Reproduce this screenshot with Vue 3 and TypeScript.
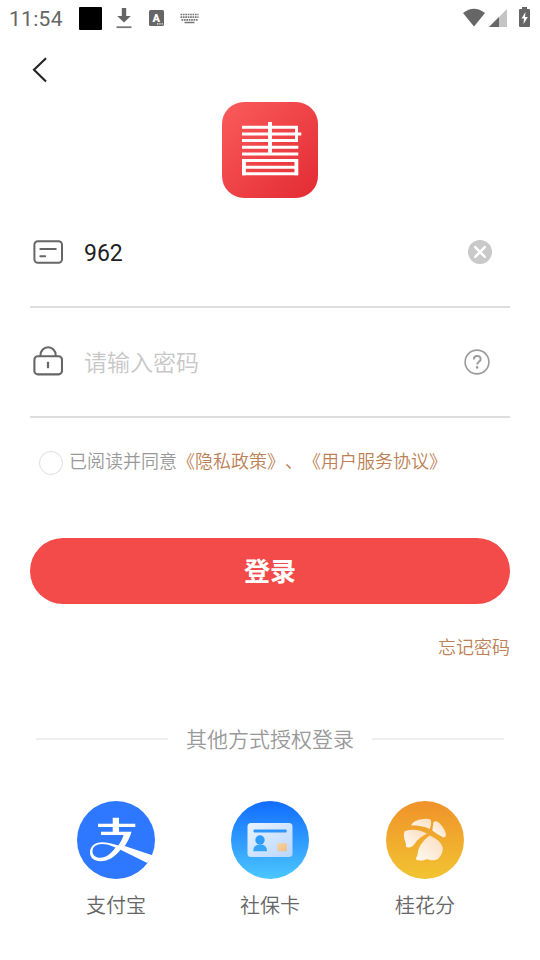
<script setup lang="ts">
import { ref } from 'vue'

interface Provider {
  id: 'alipay' | 'social' | 'osmanthus'
  label: string
}

const account = ref('962')
const password = ref('')
const agreed = ref(false)
const providers: Provider[] = [
  { id: 'alipay', label: '支付宝' },
  { id: 'social', label: '社保卡' },
  { id: 'osmanthus', label: '桂花分' },
]
</script>

<template>
  <main class="screen">
    <header class="status">
      <span class="clock">11:54</span>
      <span class="block"></span>
      <svg class="download" width="16" height="22" viewBox="0 0 16 22">
        <path d="M5.800 1h4.400v8h4.600L8 15.500 1.200 9h4.600z" fill="#666" />
        <path d="M.5 20.200h15" stroke="#777" stroke-width="1.800" />
      </svg>
      <svg class="ime" width="15" height="16" viewBox="0 0 15 16">
        <rect width="15" height="16" rx="1.500" fill="#666" />
        <text x="7.300" y="11.600" text-anchor="middle" class="ime-letter">A</text>
        <path d="M8 13.900h1.300m1 0h1.300m1 0h1.200" stroke="#fff" stroke-width="1.200" />
      </svg>
      <svg class="keyboard" width="19" height="11" viewBox="0 0 19 11">
        <path d="M.5 1.500h18M.5 4.200h18M1.500 6.900h16" stroke="#777" stroke-width="1.700" stroke-dasharray="1.700 .7" />
        <path d="M4.500 9.500h10" stroke="#777" stroke-width="1.500" />
      </svg>
      <span class="spacer"></span>
      <svg width="24" height="20" viewBox="0 0 24 20">
        <path d="M1 5Q12-3.500 23 5L12 18.500z" fill="#666" />
      </svg>
      <svg class="signal" width="18" height="18" viewBox="0 0 18 18">
        <path d="M18 0v18H0z" fill="#c4c4c4" />
        <path d="M10 8v10H0z" fill="#666" />
      </svg>
      <svg class="battery" width="11" height="20" viewBox="0 0 11 20">
        <path d="M3 0h5v2h2q1 0 1 1v16q0 1-1 1H1q-1 0-1-1V3q0-1 1-1h2z" fill="#666" />
        <path d="M6.500 5L2.500 11.500h2.500L4.500 17 8.800 10H6z" fill="#fff" />
      </svg>
    </header>

    <nav class="nav">
      <button class="plain back" aria-label="返回">
        <svg width="18" height="28" viewBox="0 0 18 28">
          <path d="M15 2.200L3 13.800 15 25.400" fill="none" stroke="#222" stroke-width="2.100" />
        </svg>
      </button>
    </nav>

    <svg class="logo" width="96" height="96" viewBox="0 0 96 96">
      <defs>
        <linearGradient id="red" x1="0" y1="0" x2="1" y2="1">
          <stop stop-color="#fb5b5c" />
          <stop offset="1" stop-color="#e22b32" />
        </linearGradient>
      </defs>
      <rect width="96" height="96" rx="22" fill="url(#red)" />
      <g fill="none" stroke="#fff" stroke-width="3">
        <path d="M20 25.200h54.500v13.400H20M20 32h59.300M20 45.300h56.300M20 51.900h56.300" />
        <path d="M48 20v32" stroke-width="3.900" />
        <path d="M21.900 58.500h52.500v13.300H21.900zM21.900 65.200h52.500" />
        <path d="M21.900 57v16.300M74.400 57v16.300" stroke-width="3.800" />
      </g>
    </svg>

    <form class="form" @submit.prevent>
      <label class="field">
        <svg class="lead" width="30" height="32" viewBox="0 0 30 32" fill="none" stroke="#666" stroke-width="2">
          <rect x="1.400" y="5.200" width="27.600" height="21.600" rx="3.500" />
          <path d="M7.300 13h15.500M7.300 20.200h4.800" stroke-linecap="round" />
        </svg>
        <input v-model="account" class="entry" type="text" />
        <button class="plain clear" type="button" aria-label="清除" @click="account = ''">
          <svg width="24" height="24" viewBox="0 0 24 24">
            <circle cx="12" cy="12" r="12" fill="#c9c9c9" />
            <path d="M7.200 7.200l9.600 9.600m0-9.600l-9.600 9.600" stroke="#fff" stroke-width="2.500" stroke-linecap="round" />
          </svg>
        </button>
      </label>
      <label class="field">
        <svg class="lead" width="30" height="32" viewBox="0 0 30 32" fill="none" stroke="#666" stroke-width="2.100">
          <rect x="1.400" y="10.200" width="27.600" height="18.200" rx="3.500" />
          <path d="M7.500 10.200v-1a7.600 8 0 0 1 15.200 0v1" />
          <path d="M15 15.800v6.400" stroke-width="2.200" />
        </svg>
        <input v-model="password" class="entry" type="password" placeholder="请输入密码" />
        <button class="plain help" type="button" aria-label="帮助">
          <svg width="26" height="26" viewBox="0 0 26 26" fill="none" stroke="#9b9b9b">
            <circle cx="13" cy="13" r="11.900" stroke-width="1.600" />
            <path d="M9.800 10.600q0-3.600 3.400-3.600t3.400 3.200c0 2.600-3.400 2.600-3.400 5.300" stroke-width="2" />
            <circle cx="13.100" cy="18.400" r="1.300" fill="#9b9b9b" stroke="none" />
          </svg>
        </button>
      </label>

      <div class="agreement">
        <button class="plain radio" type="button" role="checkbox" :aria-checked="agreed" @click="agreed = !agreed"></button>
        <span class="terms">已阅读并同意<a>《隐私政策》</a><a>、</a><a>《用户服务协议》</a></span>
      </div>

      <button class="submit" type="submit">登录</button>
      <a class="forgot">忘记密码</a>
    </form>

    <div class="divider"><span>其他方式授权登录</span></div>

    <section class="providers">
      <button v-for="p in providers" :key="p.id" class="plain provider">
        <svg v-if="p.id === 'alipay'" width="78" height="78" viewBox="0 0 78 78">
          <circle cx="39" cy="39" r="39" fill="#2e78ff" />
          <path d="M35.700 16.700h6.300v6h16.300v3.300H42v4.700h12.500c-1.500 5.500-3.800 10-6.800 14.300L76 54.500 70.300 62 43.500 48.800C38 56 31 60.300 23.500 60.300c-6.500 0-10.500-3.700-10.500-9 0-6 5-10.100 12-10.100 5.500 0 10.500 1.300 16.200 3.300 2.500-3.300 4.300-6.800 5.400-10.500H24v-3.300h11.700v-4.700H21v-3.300h14.700zM38.500 46.500c-5.500-2.500-9.500-3.500-13.700-3.500-5.500 0-9.300 3-9.300 7.300 0 4 3 6.500 7.800 6.500 5.700 0 10.700-3.800 15.200-10.300z" fill="#fff" fill-rule="evenodd" />
        </svg>
        <svg v-else-if="p.id === 'social'" width="78" height="78" viewBox="0 0 78 78">
          <defs>
            <linearGradient id="sky" x1="0" y1="0" x2="0" y2="1">
              <stop stop-color="#126cff" />
              <stop offset="1" stop-color="#4bc7ff" />
            </linearGradient>
            <linearGradient id="card" x1="0" y1="0" x2="1" y2="1">
              <stop stop-color="#eaf4ff" />
              <stop offset="1" stop-color="#b8d5ff" />
            </linearGradient>
            <linearGradient id="chip" x1="0" y1="0" x2="1" y2="1">
              <stop stop-color="#fbd19b" />
              <stop offset="1" stop-color="#e9c08d" />
            </linearGradient>
          </defs>
          <circle cx="39" cy="39" r="39" fill="url(#sky)" />
          <rect x="16.500" y="22" width="45" height="34" rx="3.500" fill="url(#card)" />
          <rect x="22.500" y="28.600" width="33.200" height="3" rx="1" fill="#2f95f8" />
          <circle cx="29" cy="39" r="4.700" fill="#2f9cf9" />
          <path d="M22.300 50.300c0-5 2.500-6.900 6.700-6.900s7 1.900 7 6.900z" fill="#35a5fa" />
          <rect x="46.300" y="42.300" width="9.700" height="8" rx="1.500" fill="url(#chip)" />
        </svg>
        <svg v-else width="78" height="78" viewBox="0 0 78 78">
          <defs>
            <linearGradient id="gold" x1="0" y1="0" x2="0" y2="1">
              <stop stop-color="#ef922a" />
              <stop offset="1" stop-color="#f2c431" />
            </linearGradient>
            <linearGradient id="petal" x1="1" y1="0" x2="0" y2="1">
              <stop stop-color="#fbdcbb" />
              <stop offset="1" stop-color="#fffaf2" />
            </linearGradient>
          </defs>
          <circle cx="39" cy="39" r="39" fill="url(#gold)" />
          <g fill="url(#petal)">
            <path d="M25 24.300Q28 18.800 37 18q6-.5 7.600.6 1.400 4-.8 9.400Q36 24.300 25 24.300z" />
            <path d="M47.300 21.500q2.500-2.600 6 .5 6 6 6.700 12 0 2.400-2.500 2.600Q52 34 46.300 29.600z" />
            <path d="M18.600 30.300Q30 26.500 41 32.700 33 36 28.500 43 25 47.800 20 46q.3-2-.6-5-2.500-6-.8-10.700z" />
            <path d="M43.500 34.500Q54.500 39 56.700 46.500q.8 6-4.500 11.300-3.500 2.200-8 1.200-4-1.400-6.200.2-5.500 1-8-.6-.2-2.300 1.400-4.200 0-10.500 12.100-19.900z" />
          </g>
        </svg>
        <span>{{ p.label }}</span>
      </button>
    </section>
  </main>
</template>

<style>
body { margin: 0; background: #fff; }
</style>

<style scoped>
* { box-sizing: border-box; }
.screen {
  width: 540px; height: 960px; overflow: hidden;
  display: flex; flex-direction: column; align-items: center;
  background: #fff; color: #666;
  font-family: Roboto, "Noto Sans CJK SC", sans-serif; font-weight: 350;
  text-spacing-trim: space-all;
}
svg { display: block; flex: none; }
.plain { padding: 0; border: 0; background: none; font: inherit; color: inherit; }
.status { width: 100%; height: 36px; padding: 0 10px 0 9px; display: flex; align-items: center; }
.clock { width: 70px; padding-top: 1px; font-size: 21px; font-weight: 400; letter-spacing: .3px; color: #666; }
.block { width: 23px; height: 23px; background: #000; border-radius: 1px; }
.download { margin-left: 14px; }
.ime { margin-left: 17px; }
.ime-letter { font: 900 11px Roboto, sans-serif; fill: #fff; }
.keyboard { margin-left: 16px; }
.spacer { flex: 1; }
.signal { margin-left: 3px; }
.battery { margin: 0 0 2px 12px; }
.nav { width: 100%; height: 66px; padding: 20px 31px; }
.form { width: 480px; display: flex; flex-direction: column; }
.field { height: 110px; display: flex; align-items: center; padding: 0 18px 0 3px; border-bottom: 2px solid #ddd; }
.entry {
  flex: 1; min-width: 0; margin-left: 21px; padding: 4px 0 0; border: 0; outline: 0;
  background: none; color: #222; font: 400 23px/36px Roboto, "Noto Sans CJK SC", sans-serif;
}
.entry::placeholder { color: #c7c7c7; opacity: 1; font-weight: 350; }
.help { margin-right: 2px; }
.agreement { height: 86px; padding: 0 0 0 9px; display: flex; align-items: center; gap: 6px; font-size: 18px; color: #999; white-space: nowrap; }
.radio { width: 24px; height: 24px; margin-top: 4px; border: 1.500px solid #ddd; border-radius: 50%; }
.terms { margin-bottom: 2px; }
a { color: #bc8156; }
.submit {
  height: 66px; margin-top: 34px; padding: 0 0 4px; border: 0; border-radius: 33px; background: #f34b4a;
  color: #fff; font: 700 26px "Noto Sans CJK SC", sans-serif;
}
.forgot { align-self: flex-end; margin-top: 31px; font-size: 18px; line-height: 26px; }
.divider { width: 468px; margin-top: 62px; display: flex; align-items: center; gap: 18px; font-size: 21px; line-height: 30px; color: #999; }
.divider span { padding-top: 2px; }
.divider::before, .divider::after { content: ""; flex: 1; height: 2px; background: #eee; }
.providers { align-self: flex-start; margin: 46px 0 0 77px; display: grid; grid-template-columns: 154px 155px 78px; justify-items: start; }
.provider { display: flex; flex-direction: column; align-items: center; gap: 12px; font-size: 20px; line-height: 30px; }
</style>
